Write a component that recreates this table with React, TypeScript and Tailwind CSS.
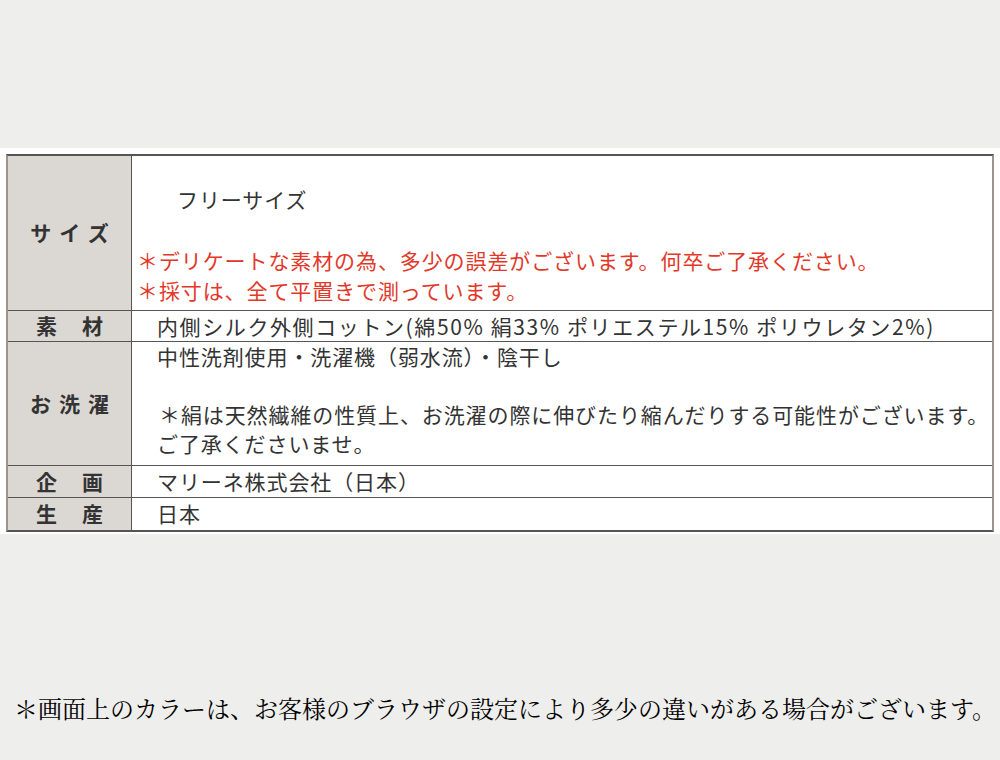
const jp = "font-['Noto_Sans_CJK_JP','Noto_Sans',sans-serif]";

const Label = ({ children, wide }: { children: React.ReactNode; wide?: boolean }) => (
  <div
    className={`w-[124px] shrink-0 bg-[#dbd7d3] border-r border-[#555] flex items-center justify-center text-[21px] font-bold text-[#333] ${
      wide ? "tracking-[8px] pl-[8px]" : "tracking-[2px] pl-[2px]"
    }`}
  >
    {children}
  </div>
);

export default function App() {
  return (
    <div className={`w-[1000px] h-[760px] bg-[#eeeeec] flex flex-col ${jp}`}>
      <div className="h-[148px]" />
      <div className="h-[386px] bg-white px-[6px] pt-[6px]">
        <div className="border-y-2 border-y-[#555] border-x-2 border-x-[#9e948f] flex flex-col text-[21px] text-[#333] tracking-[0.9px] whitespace-nowrap">
          <div className="flex h-[155px] border-b border-[#555]">
            <Label wide>サイズ</Label>
            <div className="flex-1 pl-[5px] pt-[28px]">
              <div className="leading-[30px] pl-[40px]">フリーサイズ</div>
              <div className="mt-[31px] text-[#e2382a] leading-[30px]">
                <div>＊デリケートな素材の為、多少の誤差がございます。何卒ご了承ください。</div>
                <div>＊採寸は、全て平置きで測っています。</div>
              </div>
            </div>
          </div>
          <div className="flex h-[31px] border-b border-[#555]">
            <Label>素　材</Label>
            <div className="flex-1 pl-[25px] leading-[30px] tracking-[1.6px]">
              内側シルク外側コットン(綿50% 絹33% ポリエステル15% ポリウレタン2%)
            </div>
          </div>
          <div className="flex h-[124px] border-b border-[#555]">
            <Label wide>お洗濯</Label>
            <div className="flex-1 pl-[25px] leading-[29px]">
              <div>中性洗剤使用・洗濯機（弱水流）・陰干し</div>
              <div className="h-[29px]" />
              <div className="pl-[2px]">＊絹は天然繊維の性質上、お洗濯の際に伸びたり縮んだりする可能性がございます。</div>
              <div>ご了承くださいませ。</div>
            </div>
          </div>
          <div className="flex h-[32px] border-b border-[#555]">
            <Label>企　画</Label>
            <div className="flex-1 pl-[25px] leading-[31px]">マリーネ株式会社（日本）</div>
          </div>
          <div className="flex h-[32px]">
            <Label>生　産</Label>
            <div className="flex-1 pl-[25px] leading-[31px]">日本</div>
          </div>
        </div>
      </div>
      <div className="pt-[160px] pl-[14px] text-[24px] leading-[32px] text-black whitespace-nowrap font-['Liberation_Serif','Noto_Serif_CJK_JP','Noto_Sans_CJK_JP',serif]">
        ＊画面上のカラーは、お客様のブラウザの設定により多少の違いがある場合がございます。
      </div>
    </div>
  );
}
